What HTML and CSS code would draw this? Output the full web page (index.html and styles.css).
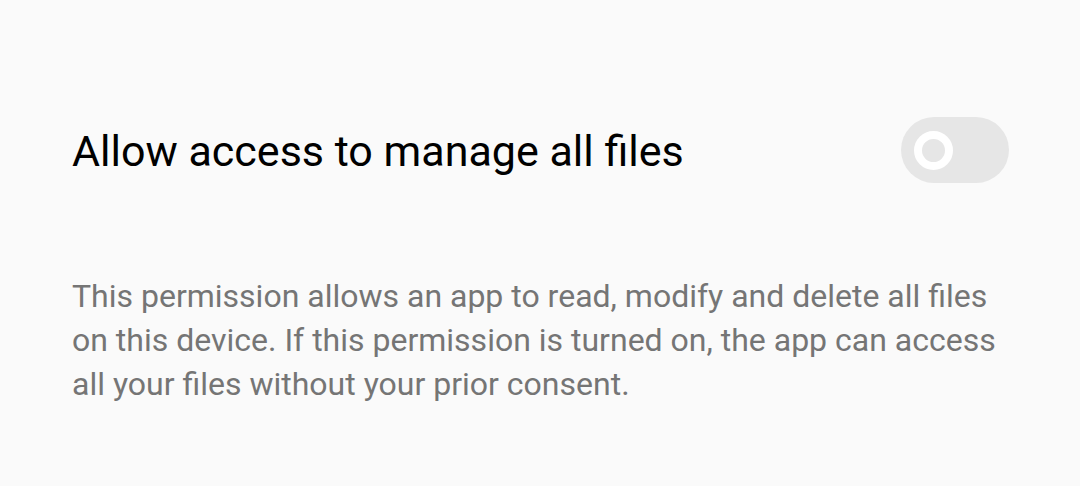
FILE: index.html
```html
<!DOCTYPE html>
<html>
<head>
    <title>All files access</title>
    <meta name="viewport" content="width=device-width, initial-scale=1.0">
    <link rel="stylesheet" href="styles.css">
</head>
<body>
    <div class="page">
        <div class="setting-row">
            <div class="setting-title">Allow access to manage all files</div>
            <div class="switch">
                <span class="knob"></span>
            </div>
        </div>

        <p class="setting-desc">This permission allows an app to read, modify and delete all files on this device. If this permission is turned on, the app can access all your files without your prior consent.</p>
    </div>
</body>
</html>
```

FILE: styles.css
```css
* { box-sizing: border-box; }

body {
    margin: 0;
    background: #fafafa;
    font-family: Roboto, "Noto Sans", Arial, sans-serif;
    color: #000;
}

.page {
    padding: 117px 72px 0;
}

.setting-row {
    display: flex;
    justify-content: space-between;
    align-items: center;
    height: 66px;
}

.setting-title {
    font-size: 43px;
    line-height: 50px;
    margin-top: 2px;
    color: #000;
}

.switch {
    width: 108px;
    height: 66px;
    border-radius: 33px;
    background: #e6e6e6;
    display: flex;
    align-items: center;
    padding-left: 13px;
    margin-right: -1px;
}

.knob {
    width: 39px;
    height: 39px;
    border-radius: 50%;
    border: 8px solid #fff;
    background: #e6e6e6;
}

.setting-desc {
    margin: 91px 0 0;
    font-size: 32px;
    line-height: 44px;
    color: #757575;
}
```
